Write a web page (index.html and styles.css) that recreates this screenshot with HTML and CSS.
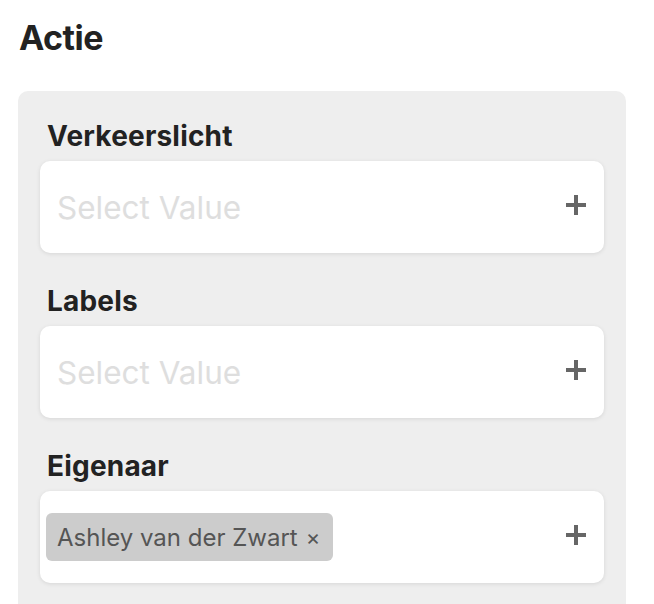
FILE: index.html
```html
<!DOCTYPE html>
<html>
<head>
<meta charset="utf-8">
<link rel="stylesheet" href="styles.css">
</head>
<body>
<h1 class="title">Actie</h1>
<div class="panel">
  <div class="field">
    <div class="label">Verkeerslicht</div>
    <div class="box">
      <span class="placeholder">Select Value</span>
      <svg class="plus" viewBox="0 0 20 20" width="20" height="20"><path d="M8 0h4v8h8v4h-8v8H8v-8H0V8h8z" fill="#666"/></svg>
    </div>
  </div>
  <div class="field">
    <div class="label">Labels</div>
    <div class="box">
      <span class="placeholder">Select Value</span>
      <svg class="plus" viewBox="0 0 20 20" width="20" height="20"><path d="M8 0h4v8h8v4h-8v8H8v-8H0V8h8z" fill="#666"/></svg>
    </div>
  </div>
  <div class="field">
    <div class="label">Eigenaar</div>
    <div class="box">
      <span class="chip">Ashley van der Zwart<span class="x">×</span></span>
      <svg class="plus" viewBox="0 0 20 20" width="20" height="20"><path d="M8 0h4v8h8v4h-8v8H8v-8H0V8h8z" fill="#666"/></svg>
    </div>
  </div>
</div>
</body>
</html>
```
FILE: styles.css
```css
html, body {
  margin: 0;
  padding: 0;
  background: #fff;
  font-family: Inter, "Noto Sans", sans-serif;
  color: #222;
}
.title {
  margin: 0;
  padding: 16px 0 0 19px;
  font-size: 34px;
  line-height: 44px;
  font-weight: 700;
  letter-spacing: -0.5px;
}
.panel {
  margin: 31px 28px 0 18px;
  background: #eeeeee;
  border-radius: 10px 10px 0 0;
  padding: 28px 22px 0;
  display: flex;
  flex-direction: column;
  gap: 31px;
  height: 513px;
  box-sizing: border-box;
  overflow: hidden;
}
.label {
  padding-left: 7px;
  font-size: 28px;
  line-height: 34px;
  font-weight: 700;
  letter-spacing: 0.2px;
  margin-bottom: 8px;
}
.box {
  height: 92px;
  box-sizing: border-box;
  background: #fff;
  border-radius: 10px;
  box-shadow: 0 1px 4px rgba(0,0,0,0.10);
  display: flex;
  align-items: center;
  padding: 0 18px 0 6px;
}
.placeholder {
  flex: 1;
  padding-left: 11px;
  font-size: 31.5px;
  color: #dedede;
}
.chip {
  height: 48px;
  box-sizing: border-box;
  display: flex;
  align-items: center;
  padding: 0 13px 0 11px;
  background: #cccccc;
  border-radius: 6px;
  font-size: 24px;
  color: #555;
  white-space: pre;
}
.chip .x {
  font-size: 22px;
  margin-left: 8px;
}
.plus {
  margin-left: auto;
  margin-bottom: 4px;
  flex: none;
}
```
